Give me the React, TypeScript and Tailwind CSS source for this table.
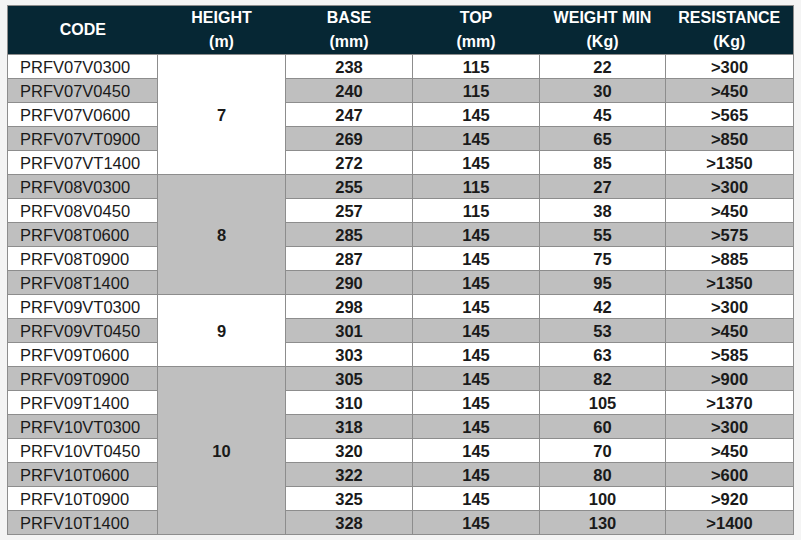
const ROWS: [string, number, number, number, string][] = [
  ['PRFV07V0300', 238, 115, 22, '>300'],
  ['PRFV07V0450', 240, 115, 30, '>450'],
  ['PRFV07V0600', 247, 145, 45, '>565'],
  ['PRFV07VT0900', 269, 145, 65, '>850'],
  ['PRFV07VT1400', 272, 145, 85, '>1350'],
  ['PRFV08V0300', 255, 115, 27, '>300'],
  ['PRFV08V0450', 257, 115, 38, '>450'],
  ['PRFV08T0600', 285, 145, 55, '>575'],
  ['PRFV08T0900', 287, 145, 75, '>885'],
  ['PRFV08T1400', 290, 145, 95, '>1350'],
  ['PRFV09VT0300', 298, 145, 42, '>300'],
  ['PRFV09VT0450', 301, 145, 53, '>450'],
  ['PRFV09T0600', 303, 145, 63, '>585'],
  ['PRFV09T0900', 305, 145, 82, '>900'],
  ['PRFV09T1400', 310, 145, 105, '>1370'],
  ['PRFV10VT0300', 318, 145, 60, '>300'],
  ['PRFV10VT0450', 320, 145, 70, '>450'],
  ['PRFV10T0600', 322, 145, 80, '>600'],
  ['PRFV10T0900', 325, 145, 100, '>920'],
  ['PRFV10T1400', 328, 145, 130, '>1400'],
]

// merged HEIGHT cells: start row -> [label, span, gray]
const GROUPS: Record<number, [string, number, boolean]> = {
  0: ['7', 5, false],
  5: ['8', 5, true],
  10: ['9', 3, false],
  13: ['10', 7, true],
}

const HEAD = [
  ['CODE', ''],
  ['HEIGHT', '(m)'],
  ['BASE', '(mm)'],
  ['TOP', '(mm)'],
  ['WEIGHT MIN', '(Kg)'],
  ['RESISTANCE', '(Kg)'],
]

const cell = 'border border-[#8d8d8d] h-[24px] p-0 text-center font-bold'

export default function App() {
  return (
    <div className="w-[801px] h-[540px] bg-[#f4f4f4] pt-[5px] pl-[7px] font-['Liberation_Sans',Arial,sans-serif] text-[16.5px] text-[#1a1a1a] leading-[22px]">
      <table className="border-collapse table-fixed w-[786px] border border-[#8d8d8d]">
        <colgroup>
          <col className="w-[150px]" />
          <col className="w-[128px]" />
          <col className="w-[127px]" />
          <col className="w-[127px]" />
          <col className="w-[126px]" />
          <col className="w-[128px]" />
        </colgroup>
        <thead>
          <tr className="bg-[#062734] text-white h-[48px]">
            {HEAD.map(([a, b]) => (
              <th key={a} className="p-0 font-bold text-center text-[16px] leading-[24px] align-middle">
                {a}
                {b && <br />}
                {b}
              </th>
            ))}
          </tr>
        </thead>
        <tbody>
          {ROWS.map(([code, base, top, weight, res], i) => {
            const gray = i % 2 === 1
            const group = GROUPS[i]
            return (
              <tr key={code} className={gray ? 'bg-[#bfbfbf]' : 'bg-white'}>
                <td className="border border-[#8d8d8d] h-[24px] p-0 pl-[12px] text-left font-normal">{code}</td>
                {group && (
                  <td
                    rowSpan={group[1]}
                    className={`${cell} align-middle ${group[2] ? 'bg-[#bfbfbf]' : 'bg-white'}`}
                  >
                    {group[0]}
                  </td>
                )}
                <td className={cell}>{base}</td>
                <td className={cell}>{top}</td>
                <td className={cell}>{weight}</td>
                <td className={cell}>{res}</td>
              </tr>
            )
          })}
        </tbody>
      </table>
    </div>
  )
}
